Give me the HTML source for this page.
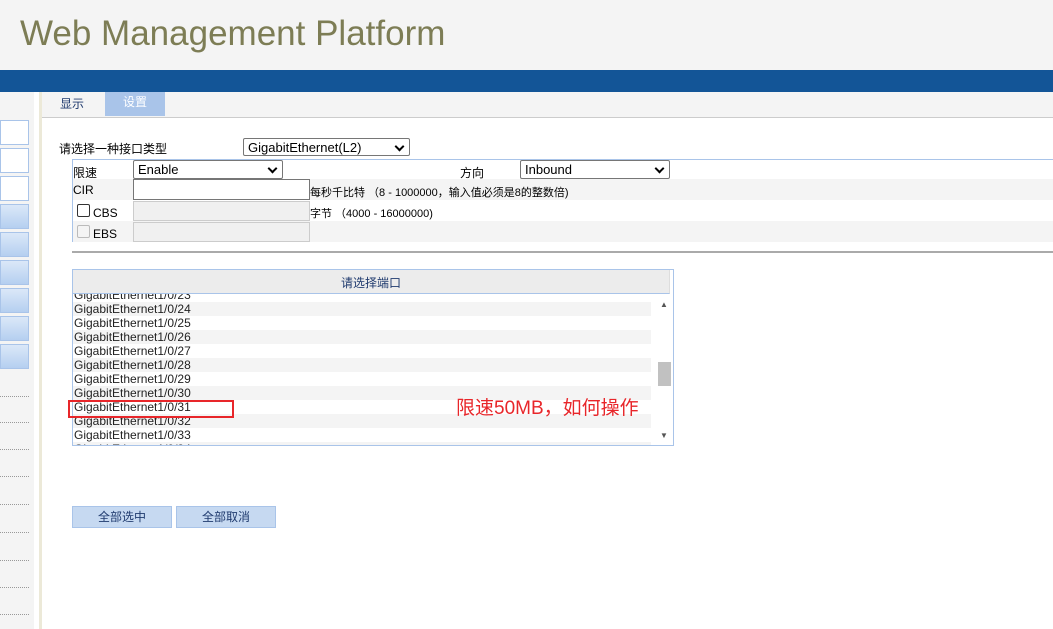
<!DOCTYPE html>
<html><head><meta charset="utf-8"><style>
*{margin:0;padding:0;box-sizing:border-box}
body{width:1053px;height:629px;overflow:hidden;background:#fff;font-family:"Liberation Sans","Noto Sans CJK SC",sans-serif;font-size:12px;color:#000;position:relative}
.a{position:absolute}
.sel{position:absolute;border:1px solid #767676;border-radius:2px;background:#fff;font-size:13px;padding-left:4px;line-height:17px}
.sel:after{content:"";position:absolute;right:6px;top:4px;width:5px;height:5px;border-right:2px solid #000;border-bottom:2px solid #000;transform:rotate(45deg)}
.row{position:absolute;left:73px;width:578px;height:14px;line-height:14px;padding-left:1px;font-size:12px;color:#222}
.g{background:#f4f4f4}
.btn{position:absolute;top:506px;height:22px;width:100px;background:#c6d9f1;border:1px solid #a9c4e9;color:#1f3a6e;text-align:center;line-height:20px;font-size:12px}
.sb{position:absolute;left:0;width:29px;height:25px;border:1px solid #a9c4e9}
.dot{position:absolute;left:0;width:29px;border-top:1px dotted #999}
</style></head><body>
<div class="a" style="left:0;top:0;width:1053px;height:70px;background:#f4f4f4"></div>
<div class="a" style="left:20px;top:14px;font-size:35px;color:#7d7d55">Web Management Platform</div>
<div class="a" style="left:0;top:70px;width:1053px;height:22px;background:#135597"></div>
<div class="a" style="left:0;top:92px;width:34px;height:537px;background:#f4f4f4"></div>
<div class="a" style="left:39px;top:92px;width:3px;height:537px;background:#ece9d8"></div>
<div class="sb" style="top:120px;background:#fff"></div>
<div class="sb" style="top:148px;background:#fff"></div>
<div class="sb" style="top:176px;background:#fff"></div>
<div class="sb" style="top:204px;background:linear-gradient(#dbe8f8,#b5cff0)"></div>
<div class="sb" style="top:232px;background:linear-gradient(#dbe8f8,#b5cff0)"></div>
<div class="sb" style="top:260px;background:linear-gradient(#dbe8f8,#b5cff0)"></div>
<div class="sb" style="top:288px;background:linear-gradient(#dbe8f8,#b5cff0)"></div>
<div class="sb" style="top:316px;background:linear-gradient(#dbe8f8,#b5cff0)"></div>
<div class="sb" style="top:344px;background:linear-gradient(#dbe8f8,#b5cff0)"></div>
<div class="dot" style="top:396px"></div><div class="dot" style="top:422px"></div><div class="dot" style="top:449px"></div><div class="dot" style="top:476px"></div><div class="dot" style="top:504px"></div><div class="dot" style="top:532px"></div><div class="dot" style="top:560px"></div><div class="dot" style="top:587px"></div><div class="dot" style="top:614px"></div>
<div class="a" style="left:42px;top:92px;width:1011px;height:26px;background:#f4f4f4;border-bottom:1px solid #ccc"></div>
<div class="a" style="left:60px;top:95px;color:#1f3a6e;font-size:12px">显示</div>
<div class="a" style="left:105px;top:92px;width:60px;height:24px;background:#a9c4e9;color:#fff;text-align:center;line-height:20px;font-size:12px">设置</div>
<div class="a" style="left:59px;top:140px;font-size:12px">请选择一种接口类型</div>
<div class="sel" style="left:243px;top:138px;width:167px;height:18px">GigabitEthernet(L2)</div>
<div class="a" style="left:72px;top:159px;width:990px;height:83px;border:1px solid #a9c4e9"></div>
<div class="a g" style="left:73px;top:179px;width:980px;height:21px"></div>
<div class="a g" style="left:73px;top:221px;width:980px;height:21px"></div>
<div class="a" style="left:73px;top:164px">限速</div>
<div class="sel" style="left:133px;top:160px;width:150px;height:19px">Enable</div>
<div class="a" style="left:460px;top:164px">方向</div>
<div class="sel" style="left:520px;top:160px;width:150px;height:19px">Inbound</div>
<div class="a" style="left:73px;top:183px">CIR</div>
<div class="a" style="left:133px;top:179px;width:177px;height:21px;border:1px solid #767676;background:#fff"></div>
<div class="a" style="left:310px;top:184px;font-size:11px">每秒千比特 （8 - 1000000，输入值必须是8的整数倍)</div>
<div class="a" style="left:77px;top:204px;width:13px;height:13px;border:1px solid #333;border-radius:2px;background:#fff"></div>
<div class="a" style="left:93px;top:206px">CBS</div>
<div class="a" style="left:133px;top:201px;width:177px;height:20px;border:1px solid #ccc;background:#f0f0f0"></div>
<div class="a" style="left:310px;top:205px;font-size:11px">字节 （4000 - 16000000)</div>
<div class="a" style="left:77px;top:225px;width:13px;height:13px;border:1px solid #bbb;border-radius:2px;background:#f4f4f4"></div>
<div class="a" style="left:93px;top:227px">EBS</div>
<div class="a" style="left:133px;top:222px;width:177px;height:20px;border:1px solid #ccc;background:#f0f0f0"></div>
<div class="a" style="left:72px;top:251px;width:981px;height:2px;background:#aaa"></div>
<div class="a" style="left:72px;top:269px;width:602px;height:177px;border:1px solid #a9c4e9;overflow:hidden">
<div class="row" style="left:0;top:18px">GigabitEthernet1/0/23</div>
<div class="row g" style="left:0;top:32px">GigabitEthernet1/0/24</div>
<div class="row" style="left:0;top:46px">GigabitEthernet1/0/25</div>
<div class="row g" style="left:0;top:60px">GigabitEthernet1/0/26</div>
<div class="row" style="left:0;top:74px">GigabitEthernet1/0/27</div>
<div class="row g" style="left:0;top:88px">GigabitEthernet1/0/28</div>
<div class="row" style="left:0;top:102px">GigabitEthernet1/0/29</div>
<div class="row g" style="left:0;top:116px">GigabitEthernet1/0/30</div>
<div class="row" style="left:0;top:130px">GigabitEthernet1/0/31</div>
<div class="row g" style="left:0;top:144px">GigabitEthernet1/0/32</div>
<div class="row" style="left:0;top:158px">GigabitEthernet1/0/33</div>
<div class="row g" style="left:0;top:172px">GigabitEthernet1/0/34</div>
<div class="a" style="left:0;top:0;width:597px;height:24px;background:#ececec;border-bottom:1px solid #a9c4e9;border-right:1px solid #ddd;color:#1f3a6e;text-align:center;line-height:26px">请选择端口</div>
<div class="a" style="left:583px;top:25px;width:16px;height:151px;background:#fff"></div>
<div class="a" style="left:587px;top:30px;font-size:8px;color:#555">▲</div>
<div class="a" style="left:585px;top:92px;width:13px;height:24px;background:#c1c1c1"></div>
<div class="a" style="left:587px;top:161px;font-size:8px;color:#555">▼</div>
</div>
<div class="a" style="left:68px;top:400px;width:166px;height:18px;border:2px solid #e8262a"></div>
<div class="a" style="left:456px;top:393px;font-size:19px;color:#e8262a">限速50MB，如何操作</div>
<div class="btn" style="left:72px">全部选中</div>
<div class="btn" style="left:176px">全部取消</div>
</body></html>
